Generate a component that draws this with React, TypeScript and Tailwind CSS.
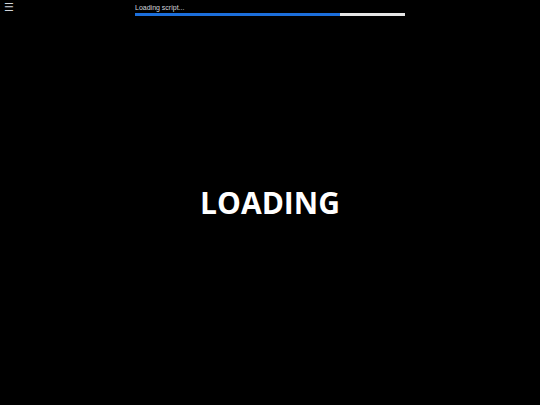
export default function App() {
  return (
    <div className="relative h-[405px] w-[540px] overflow-hidden bg-black" style={{ fontFamily: '"Open Sans", sans-serif' }}>
      <div className="absolute left-[4px] top-[2px] text-[11px] leading-none text-gray-300" style={{ fontFamily: '"DejaVu Sans", sans-serif' }}>☰</div>
      <div className="absolute left-[135px] top-[3px] w-[270px]">
        <div className="text-[7px] leading-[9px] text-gray-300" style={{ fontFamily: '"Liberation Sans", sans-serif' }}>Loading script...</div>
        <div className="mt-[1px] h-[3px] w-full bg-[#e6e6e6]">
          <div className="h-full w-[76%] bg-[#1c6fdc]" />
        </div>
      </div>
      <div className="flex h-full items-center justify-center">
        <div className="text-[30px] font-bold leading-none text-white">LOADING</div>
      </div>
    </div>
  );
}
